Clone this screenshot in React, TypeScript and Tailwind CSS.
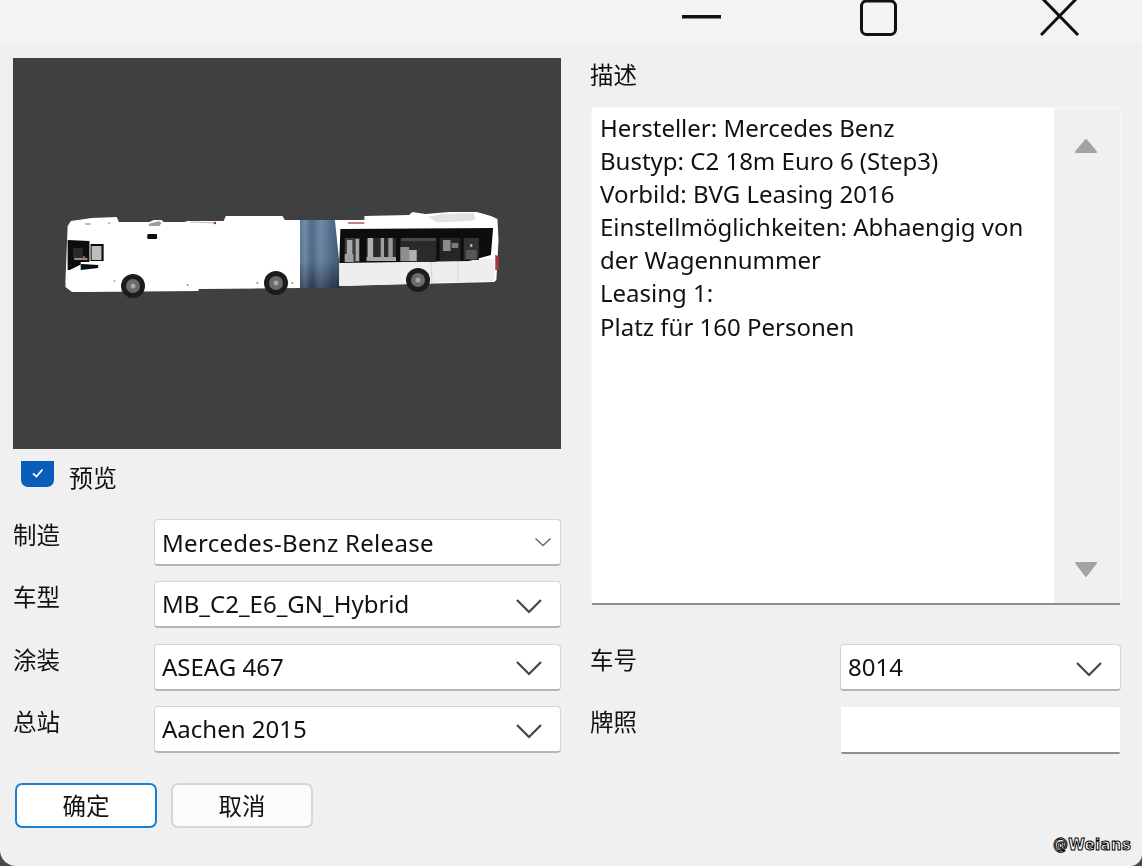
import React from "react";

const latin = "font-['Noto_Sans','Noto_Sans_CJK_SC',sans-serif]";

function Chevron({ small }: { small?: boolean }) {
  return small ? (
    <svg width="18" height="12" viewBox="0 0 18 12" fill="none" className="shrink-0 mr-[8px]">
      <path d="M1.5 2.5 L9 9.5 L16.5 2.5" stroke="#6a6a6a" strokeWidth="1.6" />
    </svg>
  ) : (
    <svg width="28" height="18" viewBox="0 0 28 18" fill="none" className="shrink-0 mr-[17px] mt-[3px]">
      <path d="M2 3 L14 15 L26 3" stroke="#444444" strokeWidth="2.2" />
    </svg>
  );
}

function Select({ value, small, className }: { value: string; small?: boolean; className: string }) {
  return (
    <div
      className={`flex items-center justify-between h-[47px] bg-white border border-[#d4d4d4] border-b-2 border-b-[#b5b5b5] rounded-[4px] pl-[7px] text-[24px] text-[#111111] ${className}`}
    >
      <span className={small ? "pt-[1px] tracking-[0.3px]" : ""}>{value}</span>
      <Chevron small={small} />
    </div>
  );
}

function FormRow({ label, value, small }: { label: string; value: string; small?: boolean }) {
  return (
    <div className="flex items-start h-[47px] mb-[15.4px]">
      <div className="w-[141px] text-[23.5px] leading-[32px] text-[#111111]">{label}</div>
      <Select value={value} small={small} className="w-[407px]" />
    </div>
  );
}

function Bus() {
  return (
    <svg viewBox="13 58 548 391" className="block w-full h-full">
      <defs>
        <linearGradient id="joint" x1="0" y1="0" x2="0" y2="1">
          <stop offset="0" stopColor="#5d7c9e" />
          <stop offset="0.6" stopColor="#5a7696" />
          <stop offset="1" stopColor="#2f4258" />
        </linearGradient>
        <linearGradient id="jointH" x1="0" y1="0" x2="1" y2="0">
          <stop offset="0" stopColor="#000000" stopOpacity="0.05" />
          <stop offset="0.18" stopColor="#ffffff" stopOpacity="0.12" />
          <stop offset="0.35" stopColor="#000000" stopOpacity="0.14" />
          <stop offset="0.55" stopColor="#ffffff" stopOpacity="0.1" />
          <stop offset="0.8" stopColor="#000000" stopOpacity="0.12" />
          <stop offset="1" stopColor="#000000" stopOpacity="0.25" />
        </linearGradient>
        <filter id="soft">
          <feGaussianBlur stdDeviation="0.7" />
        </filter>
      </defs>
      <g filter="url(#soft)">
        <g transform="scale(1.0909 1)">
          <rect x="272" y="220" width="40" height="68" fill="url(#joint)" />
          <rect x="272" y="220" width="40" height="68" fill="url(#jointH)" />
          <path
            d="M62 226 L65 221 L84 218 L107 217 L109 222 L137 222 L141 220 L148 220 L150 222 L169 222 L172 221 L205 221 L207 216 L259 216 L261 220 L275 220 L275 288 L182 289 L182 291 L80 292 L66 292 L60 287 L60 280 Z"
            fill="#ffffff"
          />
          <path
            d="M307 220 L334 220 L334 216 L375 215 L378 212 L390 214 L412 212 L437 212 L450 216 L456 219 L457 240 L455 280 L453 282 L311 286 L311 262 Z"
            fill="#ffffff"
          />
          <path d="M311 263 L453 259 L453 281 L311 286 Z" fill="#eeeeee" />
          <path d="M395 260 L396 283 M420 260 L420 282" stroke="#d5d5d5" strokeWidth="1" />
          <path d="M312 229 L452 228 L450 255 L430 261 L311 263 Z" fill="#0d0d0d" />
          <path d="M392 217 L404 214 L434 213 L436 220 L414 222 L400 222 Z" fill="#e2e2e2" />
          <path d="M319 223 L334 223" stroke="#b05a5a" strokeWidth="1.5" />

          <rect x="316" y="238" width="14" height="24" fill="#3a3a3a" />
          <rect x="318" y="240" width="5" height="14" fill="#a9a9a9" />
          <rect x="316" y="254" width="8" height="8" fill="#a0a0a0" />
          <rect x="326" y="239" width="3" height="22" fill="#a8a8a8" />

          <rect x="336" y="238" width="27" height="23" fill="#2c2c2c" />
          <rect x="337" y="238" width="5" height="22" fill="#b0b0b0" />
          <rect x="336" y="257" width="27" height="4" fill="#a8a8a8" />
          <rect x="349" y="238" width="3" height="20" fill="#a0a0a0" />
          <rect x="356" y="238" width="4" height="20" fill="#989898" />

          <rect x="367" y="238" width="33" height="24" fill="#2a2a2a" />
          <rect x="367" y="247" width="8" height="14" fill="#8f8f8f" />
          <rect x="375" y="250" width="7" height="11" fill="#b0b0b0" />
          <rect x="368" y="238" width="32" height="3" fill="#4a4a4a" />

          <rect x="403" y="238" width="19" height="23" fill="#262626" />
          <rect x="406" y="240" width="7" height="11" fill="#8c8c8c" />
          <rect x="414" y="243" width="6" height="5" fill="#7c7c7c" />

          <rect x="425" y="238" width="14" height="22" fill="#303030" />
          <rect x="427" y="250" width="10" height="9" fill="#585858" />
          <rect x="431" y="244" width="2" height="3" fill="#b0b0b0" />

          <path d="M454 255 L457 256 L457 270 L454 270 Z" fill="#b0353a" />
          <path d="M62 240 L82 241 L82 262 L74 262 L74 270 L90 268 L90 265 L75 264 L64 270 L62 270 Z" fill="#0d0d0d" />
          <rect x="67" y="248" width="9" height="10" fill="#2a2a2a" />
          <path d="M68 258 L80 258 L80 260 L68 260 Z" fill="#8f8f8f" />
          <rect x="76" y="256" width="2" height="3" fill="#b35b20" />
          <rect x="83" y="244" width="12" height="17" fill="#0d0d0d" />
          <rect x="84" y="246" width="9" height="14" fill="#bdbdbd" />
          <rect x="135" y="234" width="9" height="5" rx="1" fill="#111111" />
          <path d="M136 224 L146 221 L148 223 L146 226 L137 226 Z" fill="#9d9d9d" />
          <path d="M175 222 L198 223" stroke="#c9b4b4" strokeWidth="1.2" />
          <circle cx="197" cy="223" r="1.2" fill="#9a3a3a" />
          <rect x="78" y="223" width="5" height="2" fill="#bbbbbb" />
          <circle cx="100" cy="223" r="1" fill="#aaaaaa" />
          <circle cx="105" cy="281" r="1" fill="#ccaaaa" />
          <circle cx="172" cy="285" r="1" fill="#999999" />
          <circle cx="236" cy="283" r="1" fill="#999988" />
          <circle cx="268" cy="283" r="1" fill="#999988" />
        </g>
        {[
          [133, 286],
          [276, 283],
          [418, 280],
        ].map(([cx, cy]) => (
          <g key={cx}>
            <circle cx={cx} cy={cy} r="12" fill="#1c1c1c" />
            <circle cx={cx} cy={cy} r="7" fill="#6a6a6a" />
            <circle cx={cx} cy={cy} r="2.5" fill="#a5a5a5" />
          </g>
        ))}
      </g>
    </svg>
  );
}

export default function App() {
  return (
    <div className="relative w-[1142px] h-[866px] bg-[#4a4a4a] overflow-hidden">
      <div className={`w-full h-full bg-[#f0f0f0] rounded-bl-[16px] rounded-br-[12px] overflow-hidden blur-[0.4px] ${latin}`}>
        <div className="flex h-[43px] bg-[#f3f3f3] pl-[681px] pt-0">
          <svg width="40" height="36" viewBox="0 0 40 36" className="mr-[137px]">
            <rect x="1" y="15" width="39" height="3.5" fill="#111111" />
          </svg>
          <svg width="40" height="36" viewBox="0 0 40 36" className="mr-[142px]">
            <rect x="3.5" y="1" width="34" height="33.5" rx="5" fill="none" stroke="#111111" strokeWidth="3" />
          </svg>
          <svg width="40" height="36" viewBox="0 0 40 36">
            <path d="M1 -3 L38 35 M38 -3 L1 35" stroke="#111111" strokeWidth="3" fill="none" />
          </svg>
        </div>

        <div className="flex pl-[13px] pt-[15px]">
          <div className="w-[548px]">
            <div className="h-[391px] bg-[#404040]">
              <Bus />
            </div>
            <div className="flex items-start h-[70px] pl-[8px]">
              <div className="relative w-[33px] h-[26px] mt-[12px] bg-[#0a5db8] rounded-b-[7px] flex items-center justify-center">
                <svg width="16" height="12" viewBox="0 0 16 12" fill="none" className="-mt-[3px]">
                  <path d="M3 6.5 L6.5 9.5 L12.5 2.5" stroke="#ffffff" strokeWidth="1.8" />
                </svg>
              </div>
              <span className="ml-[15px] mt-[13px] text-[24px] leading-[32px] text-[#111111]">预览</span>
            </div>
            <FormRow label="制造" value="Mercedes-Benz Release" small />
            <FormRow label="车型" value="MB_C2_E6_GN_Hybrid" />
            <FormRow label="涂装" value="ASEAG 467" />
            <FormRow label="总站" value="Aachen 2015" />
            <div className="flex gap-[14px] pl-[2px] mt-[30px]">
              <button className="w-[142px] h-[45px] bg-white border-2 border-[#1a7fd1] rounded-[7px] pt-[1px] text-[23.5px] text-[#111111]">
                确定
              </button>
              <button className="w-[142px] h-[45px] bg-[#fbfbfb] border-2 border-[#d6d6d6] rounded-[7px] pt-[1px] text-[23.5px] text-[#111111]">
                取消
              </button>
            </div>
          </div>

          <div className="w-[530px] ml-[30px]">
            <div className="h-[49px] -ml-[1px] text-[23.5px] leading-[35px] text-[#111111]">描述</div>
            <div className="flex h-[498px] bg-white border border-[#f7f7f7] border-b-2 border-b-[#8f8f8f] rounded-[2px]">
              <div className="flex-1 pl-[8px] pt-[3px] text-[24px] leading-[33.1px] text-[#111111]">
                <div>Hersteller: Mercedes Benz</div>
                <div>Bustyp: C2 18m Euro 6 (Step3)</div>
                <div>Vorbild: BVG Leasing 2016</div>
                <div>Einstellmöglichkeiten: Abhaengig von</div>
                <div>der Wagennummer</div>
                <div>Leasing 1:</div>
                <div>Platz für 160 Personen</div>
              </div>
              <div className="flex flex-col justify-between items-center w-[66px] bg-[#f0f0f0] pt-[30px] pb-[24px] pr-[2px]">
                <svg width="24" height="16" viewBox="0 0 24 16">
                  <path d="M12 2 L22 14 L2 14 Z" fill="#a3a3a3" stroke="#a3a3a3" strokeWidth="2" strokeLinejoin="round" />
                </svg>
                <svg width="24" height="18" viewBox="0 0 24 18">
                  <path d="M2 2 L22 2 L12 15 Z" fill="#a3a3a3" stroke="#a3a3a3" strokeWidth="2" strokeLinejoin="round" />
                </svg>
              </div>
            </div>
            <div className="flex items-start h-[47px] mt-[39px] mb-[16px]">
              <div className="w-[250px] -ml-[1px] text-[23.5px] leading-[32px] text-[#111111]">车号</div>
              <Select value="8014" className="w-[281px]" />
            </div>
            <div className="flex items-start h-[47px]">
              <div className="w-[251px] -ml-[1px] text-[23.5px] leading-[30px] text-[#111111]">牌照</div>
              <div className="w-[279px] h-[47px] bg-white border-b-2 border-b-[#8f8f8f] rounded-[2px]" />
            </div>
          </div>
        </div>
      </div>
      <div className="absolute left-[1053px] top-[834px] font-['DejaVu_Sans',sans-serif] text-[15px] leading-[22px] tracking-[0.3px] text-white font-bold [-webkit-text-stroke:1px_#000000]">
        @Weians
      </div>
    </div>
  );
}
